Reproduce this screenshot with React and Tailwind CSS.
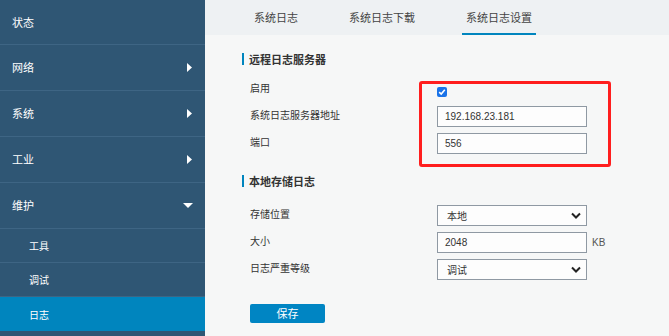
import React from 'react';

const font = { fontFamily: '"Noto Sans CJK SC", "Liberation Sans", sans-serif' };

const RightArrow = () => (
  <svg width="5" height="9" viewBox="0 0 5 9" className="mr-[13px]">
    <path d="M0 0 L5 4.5 L0 9 Z" fill="#fff" />
  </svg>
);

const DownArrow = () => (
  <svg width="10" height="5" viewBox="0 0 10 5" className="mr-[12px]">
    <path d="M0 0 L10 0 L5 5 Z" fill="#fff" />
  </svg>
);

const Chevron = () => (
  <svg width="10" height="7" viewBox="0 0 10 7">
    <path d="M1 1.5 L5 5.5 L9 1.5" stroke="#222" strokeWidth="2" fill="none" />
  </svg>
);

const SectionTitle = ({ children }) => (
  <div className="flex items-center h-[12px]">
    <div className="w-[2px] h-[12px] bg-[#0085be]" />
    <span className="ml-[5px] text-[11px] font-bold text-[#333] leading-none">{children}</span>
  </div>
);

const Row = ({ label, children, last }) => (
  <div className={`flex items-center h-[21px] ${last ? '' : 'mb-[6px]'}`}>
    <div className="w-[195px] pl-[8px] text-[10px] text-[#333] leading-none -mt-[4px]">{label}</div>
    {children}
  </div>
);

const TextBox = ({ value }) => (
  <div className="w-[150px] h-[21px] border border-[#8f99a3] bg-[#fdfdfd] flex items-center pl-[7px] text-[10px] text-[#333]" style={{ fontFamily: '"Liberation Sans", Arial, sans-serif' }}>
    {value}
  </div>
);

const SelectBox = ({ value }) => (
  <div className="w-[150px] h-[21px] border border-[#8f99a3] bg-[#fdfdfd] flex items-center justify-between pl-[9px] pr-[5px] text-[10px] text-[#333]">
    <span>{value}</span>
    <Chevron />
  </div>
);

export default function App() {
  const menu = [
    { label: '状态', h: 'h-[44px]' },
    { label: '网络', h: 'h-[45px]', arrow: 'right' },
    { label: '系统', h: 'h-[45px]', arrow: 'right' },
    { label: '工业', h: 'h-[45px]', arrow: 'right' },
    { label: '维护', h: 'h-[45px]', arrow: 'down' },
  ];
  const sub = ['工具', '调试'];

  return (
    <div className="w-[669px] h-[336px] flex bg-[#f6f7f7] overflow-hidden" style={font}>
      {/* Sidebar */}
      <div className="w-[205px] h-full bg-[#2f5674] flex flex-col text-white">
        {menu.map((m) => (
          <div key={m.label} className={`${m.h} border-b border-[#3e6584] flex items-center justify-between box-content`}>
            <span className="ml-[12px] text-[11px]">{m.label}</span>
            {m.arrow === 'right' && <RightArrow />}
            {m.arrow === 'down' && <DownArrow />}
          </div>
        ))}
        {sub.map((s) => (
          <div key={s} className="h-[33px] border-b border-[#3e6584] flex items-center box-content">
            <span className="ml-[29px] text-[10px]">{s}</span>
          </div>
        ))}
        <div className="h-[34px] bg-[#0085be] flex items-center">
          <span className="ml-[29px] text-[10px]">日志</span>
        </div>
      </div>

      {/* Main */}
      <div className="flex-1 flex flex-col">
        <div className="h-[35px] bg-[#eef1f3] flex items-end pl-[45px] gap-[43px] text-[11px] text-[#444]">
          <div className="h-[35px] px-[4px] flex items-center">系统日志</div>
          <div className="h-[35px] px-[4px] flex items-center">系统日志下载</div>
          <div className="h-[35px] px-[4px] flex items-center border-b-2 border-[#0085be] pt-[2px]">系统日志设置</div>
        </div>

        <div className="relative pl-[37px] pt-[18px]">
          <SectionTitle>远程日志服务器</SectionTitle>
          <div className="mt-[14px]">
            <Row label="启用">
              <div className="w-[10px] h-[10px] rounded-[2px] bg-[#1a73e8] flex items-center justify-center mt-[4px]">
                <svg width="8" height="8" viewBox="0 0 8 8">
                  <path d="M1.2 4.2 L3.2 6 L6.8 1.8" stroke="#fff" strokeWidth="1.6" fill="none" />
                </svg>
              </div>
            </Row>
            <Row label="系统日志服务器地址">
              <TextBox value="192.168.23.181" />
            </Row>
            <Row label="端口" last>
              <TextBox value="556" />
            </Row>
          </div>

          <div className="mt-[21px]">
            <SectionTitle>本地存储日志</SectionTitle>
          </div>
          <div className="mt-[18px]">
            <Row label="存储位置">
              <SelectBox value="本地" />
            </Row>
            <Row label="大小">
              <TextBox value="2048" />
              <span className="ml-[5px] text-[10px] text-[#555]" style={{ fontFamily: '"Liberation Sans", Arial, sans-serif' }}>KB</span>
            </Row>
            <Row label="日志严重等级" last>
              <SelectBox value="调试" />
            </Row>
          </div>

          <button className="mt-[24px] ml-[8px] w-[75px] h-[19px] rounded-[2px] bg-[#0085c3] text-white text-[11px] flex items-center justify-center">
            保存
          </button>

          {/* annotation */}
          <div className="absolute left-[214px] top-[46px] w-[192px] h-[86px] border-[3px] border-[#ff1e1e] rounded-[3px] pointer-events-none" />
        </div>
      </div>
    </div>
  );
}
